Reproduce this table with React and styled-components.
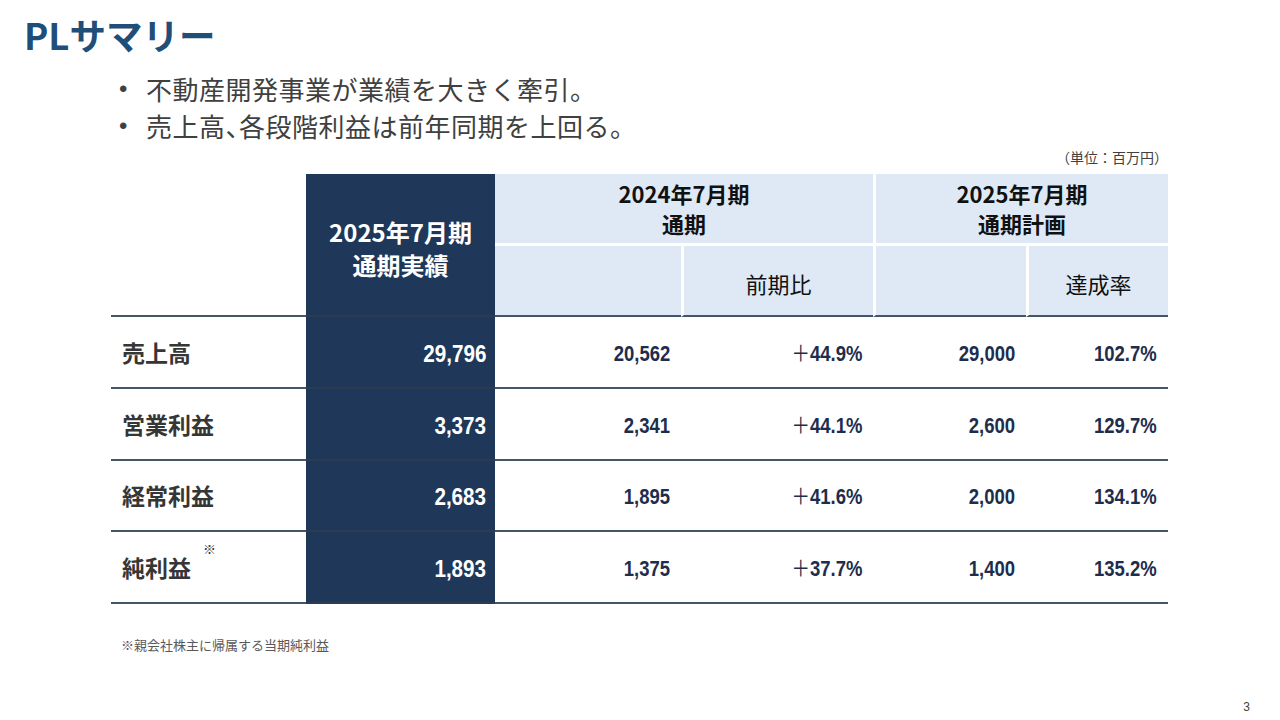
import React from "react";
import styled, { createGlobalStyle } from "styled-components";

const Global = createGlobalStyle`
  html, body { margin: 0; padding: 0; background: #fff; }
  body { font-family: "Noto Sans CJK JP", "Noto Sans", sans-serif; }
`;

const Slide = styled.div`
  width: 1280px;
  height: 720px;
  box-sizing: border-box;
  display: flex;
  flex-direction: column;
  position: relative;
  overflow: hidden;
`;

const Title = styled.h1`
  margin: 12px 0 0 24px;
  font-size: 36.5px;
  line-height: 46px;
  font-weight: 700;
  color: #1f4e79;
  font-family: "Noto Sans CJK JP", sans-serif;
`;

const Bullets = styled.ul`
  margin: 12px 0 0 0;
  padding: 0 0 0 119px;
  list-style: none;
  color: #404040;
  font-size: 26px;
  font-family: "Noto Sans CJK JP", sans-serif;
`;

const Bullet = styled.li`
  display: flex;
  height: 37px;
  line-height: 37px;
  letter-spacing: 0.5px;
  &::before {
    content: "•";
    width: 27px;
    flex: none;
    font-size: 24px;
    font-family: "Liberation Sans", sans-serif;
  }
`;

const Tight = styled.span`
  font-feature-settings: "halt";
`;

const Unit = styled.div`
  align-self: flex-end;
  margin: 4px 112px 0 0;
  font-size: 14px;
  line-height: 18px;
  color: #404040;
`;

const Table = styled.div`
  margin: 8px 0 0 111px;
  width: 1057px;
  display: grid;
  grid-template-columns: 195px 189px 186px 192px 153px 142px;
  grid-template-rows: 72px 71px repeat(4, 71.75px);
  font-family: "Noto Sans CJK JP", sans-serif;
`;

const Blank = styled.div`
  grid-row: 1 / span 2;
  border-bottom: 2px solid #44546a;
`;

const DarkHead = styled.div`
  grid-row: 1 / span 2;
  background: #1f3859;
  color: #fff;
  font-size: 24px;
  font-weight: 700;
  line-height: 33px;
  display: flex;
  align-items: center;
  justify-content: center;
  text-align: center;
  padding-top: 6px;
  border-bottom: 2px solid #2a3b52;
`;

const GroupHead = styled.div`
  grid-column: span 2;
  background: #dee9f5;
  border-left: ${(p) => (p.$sep ? "3px solid #fff" : "none")};
  border-bottom: 3px solid #fff;
  color: #111;
  font-size: 22px;
  font-weight: 700;
  line-height: 30px;
  display: flex;
  align-items: center;
  justify-content: center;
  text-align: center;
  padding-bottom: 2px;
`;

const SubHead = styled.div`
  background: #dee9f5;
  border-left: ${(p) => (p.$sep ? "3px solid #fff" : "none")};
  border-bottom: 2px solid #44546a;
  color: #111;
  font-size: 22px;
  display: flex;
  align-items: center;
  justify-content: center;
  padding-top: 4px;
`;

const Label = styled.div`
  border-bottom: 2px solid #44546a;
  display: flex;
  align-items: center;
  padding-left: 11px;
  font-size: 23px;
  font-weight: 700;
  color: #363636;
  position: relative;
`;

const Note = styled.span`
  position: absolute;
  left: 92px;
  top: 7px;
  font-size: 13px;
  font-weight: 400;
`;

const Num = styled.div`
  border-bottom: 2px solid ${(p) => (p.$dark ? "#2a3b52" : "#44546a")};
  background: ${(p) => (p.$dark ? "#1f3859" : "transparent")};
  color: ${(p) => (p.$dark ? "#fff" : "#1e2d4c")};
  display: flex;
  align-items: center;
  justify-content: flex-end;
  padding-right: ${(p) => (p.$dark ? 9 : 11)}px;
  padding-top: 4px;
`;

const Digits = styled.span`
  display: inline-block;
  white-space: nowrap;
  line-height: 24px;
  font-family: "Liberation Sans", "Noto Sans CJK JP", sans-serif;
  font-weight: 700;
  font-size: ${(p) => (p.$big ? 24 : 22)}px;
  transform: scaleX(${(p) => (p.$big ? 0.86 : 0.84)});
  transform-origin: right center;
`;

const Plus = styled.span`
  font-family: "Noto Sans CJK JP", sans-serif;
  font-weight: 400;
  font-size: 22px;
  line-height: 0;
`;

const Footnote = styled.div`
  margin: 32px 0 0 121px;
  font-size: 13px;
  line-height: 18px;
  color: #595959;
`;

const PageNum = styled.div`
  position: absolute;
  right: 30px;
  bottom: 6px;
  font-size: 12px;
  color: #404040;
  font-family: "Liberation Sans", sans-serif;
`;

const rows = [
  { label: "売上高", a: "29,796", b: "20,562", c: "44.9%", d: "29,000", e: "102.7%" },
  { label: "営業利益", a: "3,373", b: "2,341", c: "44.1%", d: "2,600", e: "129.7%" },
  { label: "経常利益", a: "2,683", b: "1,895", c: "41.6%", d: "2,000", e: "134.1%" },
  { label: "純利益", a: "1,893", b: "1,375", c: "37.7%", d: "1,400", e: "135.2%", note: true },
];

export default function App() {
  return (
    <>
      <Global />
      <Slide>
        <Title>PLサマリー</Title>
        <Bullets>
          <Bullet>不動産開発事業が業績を大きく牽引。</Bullet>
          <Bullet>
            売上高<Tight>、</Tight>各段階利益は前年同期を上回る。
          </Bullet>
        </Bullets>
        <Unit>（単位：百万円）</Unit>
        <Table>
          <Blank />
          <DarkHead>
            2025年7月期
            <br />
            通期実績
          </DarkHead>
          <GroupHead>
            2024年7月期
            <br />
            通期
          </GroupHead>
          <GroupHead $sep>
            2025年7月期
            <br />
            通期計画
          </GroupHead>
          <SubHead />
          <SubHead $sep>前期比</SubHead>
          <SubHead $sep />
          <SubHead $sep>達成率</SubHead>
          {rows.map((r) => (
            <React.Fragment key={r.label}>
              <Label>
                {r.label}
                {r.note && <Note>※</Note>}
              </Label>
              <Num $dark>
                <Digits $big>{r.a}</Digits>
              </Num>
              <Num>
                <Digits>{r.b}</Digits>
              </Num>
              <Num>
                <Digits>
                  <Plus>＋</Plus>
                  {r.c}
                </Digits>
              </Num>
              <Num>
                <Digits>{r.d}</Digits>
              </Num>
              <Num>
                <Digits>{r.e}</Digits>
              </Num>
            </React.Fragment>
          ))}
        </Table>
        <Footnote>※親会社株主に帰属する当期純利益</Footnote>
        <PageNum>3</PageNum>
      </Slide>
    </>
  );
}
